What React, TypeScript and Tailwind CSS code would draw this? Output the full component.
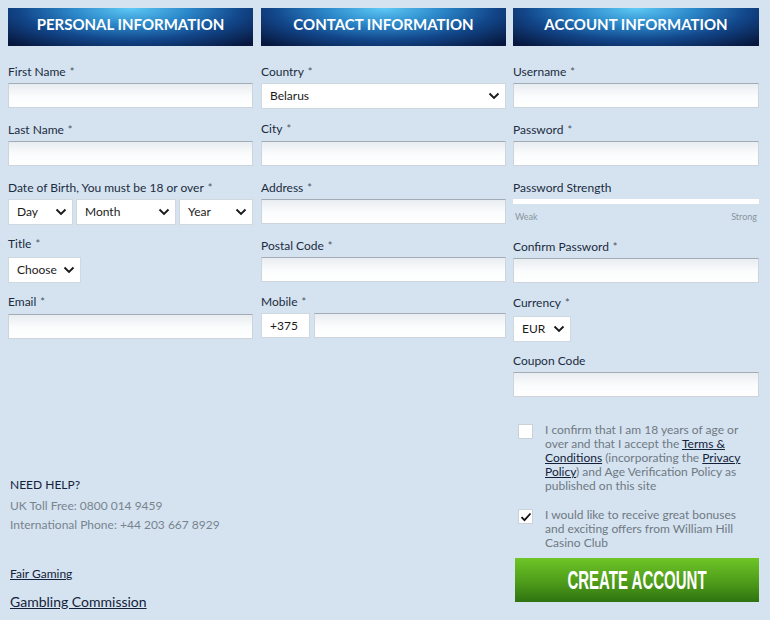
import React from "react";

const font = { fontFamily: "Lato, 'Open Sans', sans-serif" };

function Header({ children }: { children: React.ReactNode }) {
  return (
    <div className="h-[38px] flex items-center justify-center pb-[6px] text-white font-bold text-[15px] bg-[radial-gradient(ellipse_70%_130%_at_50%_0%,#5fcaf6_0%,#2a86c8_35%,#12468a_65%,#07173d_100%)]">
      {children}
    </div>
  );
}

function Label({ text, req = true }: { text: string; req?: boolean }) {
  return (
    <div className="h-[16px] leading-[16px] text-[12px] text-[#1b2b40]">
      {text}
      {req && <span className="ml-[4px] text-[#4a5563] text-[11px]">*</span>}
    </div>
  );
}

function Input({ className = "" }: { className?: string }) {
  return (
    <div
      className={`h-[25px] border border-[#cdd4dc] border-t-[#a3abb4] bg-[linear-gradient(#e9edf1,#fbfcfd_55%,#ffffff)] ${className}`}
    />
  );
}

function Chevron() {
  return (
    <svg width="12" height="8" viewBox="0 0 12 8" className="shrink-0">
      <path d="M1.5 1.5 L6 6 L10.5 1.5" fill="none" stroke="#1a1a1a" strokeWidth="1.9" />
    </svg>
  );
}

function Select({ value, className = "" }: { value: string; className?: string }) {
  return (
    <div
      className={`h-[26px] flex items-center justify-between pl-[8px] pr-[5px] bg-white border border-[#cfd7df] text-[12px] text-[#1a1a1a] ${className}`}
    >
      <span>{value}</span>
      <Chevron />
    </div>
  );
}

function Field({ label, req = true, children, mt = "mt-[14px]" }: { label: string; req?: boolean; children: React.ReactNode; mt?: string }) {
  return (
    <div className={mt}>
      <Label text={label} req={req} />
      <div className="mt-[3px]">{children}</div>
    </div>
  );
}

function Checkbox({ checked }: { checked?: boolean }) {
  return (
    <div className="w-[15px] h-[15px] bg-white border border-[#c9d1d9] flex items-center justify-center shrink-0">
      {checked && (
        <svg width="12" height="10" viewBox="0 0 12 10">
          <path d="M1.5 5.2 L4.5 8.2 L10.5 1.5" fill="none" stroke="#111" strokeWidth="1.8" />
        </svg>
      )}
    </div>
  );
}

export default function App() {
  return (
    <div style={font} className="w-[770px] h-[620px] bg-[#d5e3f0] overflow-hidden">
      <div className="grid grid-cols-[245px_245px_245px] gap-x-[8px] pl-[8px] pt-[8px]">
        {/* Column 1 */}
        <div className="flex flex-col">
          <Header>PERSONAL INFORMATION</Header>
          <Field label="First Name" mt="mt-[18px]">
            <Input />
          </Field>
          <Field label="Last Name">
            <Input />
          </Field>
          <Field label="Date of Birth, You must be 18 or over">
            <div className="flex gap-[3px]">
              <Select value="Day" className="w-[65px]" />
              <Select value="Month" className="w-[100px]" />
              <Select value="Year" className="flex-1" />
            </div>
          </Field>
          <div className="mt-[11px]">
            <Label text="Title" />
            <div className="mt-[5px]">
              <Select value="Choose" className="w-[73px]" />
            </div>
          </div>
          <div className="mt-[11px]">
            <Label text="Email" />
            <div className="mt-[4px]">
              <Input />
            </div>
          </div>
          <div className="mt-[138px] pl-[2px]">
            <div className="text-[12px] leading-[16px] text-[#13223a]">NEED HELP?</div>
            <div className="mt-[3px] text-[12px] leading-[19px] text-[#78838f]">
              <div>UK Toll Free: 0800 014 9459</div>
              <div>International Phone: +44 203 667 8929</div>
            </div>
            <div className="mt-[32px] text-[12px] leading-[16px] text-[#13223a] underline">Fair Gaming</div>
            <div className="mt-[11px] text-[14px] leading-[18px] text-[#13223a] underline">Gambling Commission</div>
          </div>
        </div>

        {/* Column 2 */}
        <div className="flex flex-col">
          <Header>CONTACT INFORMATION</Header>
          <Field label="Country" mt="mt-[18px]">
            <Select value="Belarus" />
          </Field>
          <div className="mt-[12px]">
            <Label text="City" />
            <div className="mt-[4px]">
              <Input />
            </div>
          </div>
          <div className="mt-[14px]">
            <Label text="Address" />
            <div className="mt-[3px]">
              <Input />
            </div>
          </div>
          <div className="mt-[14px]">
            <Label text="Postal Code" />
            <div className="mt-[3px]">
              <Input />
            </div>
          </div>
          <div className="mt-[12px]">
            <Label text="Mobile" />
            <div className="mt-[3px] flex gap-[4px]">
              <div className="w-[49px] h-[25px] bg-white border border-[#cfd7df] flex items-center pl-[8px] text-[12px] text-[#1a1a1a]">
                +375
              </div>
              <Input className="flex-1" />
            </div>
          </div>
        </div>

        {/* Column 3 */}
        <div className="flex flex-col -ml-[1px]">
          <Header>ACCOUNT INFORMATION</Header>
          <Field label="Username" mt="mt-[18px]">
            <Input />
          </Field>
          <Field label="Password">
            <Input />
          </Field>
          <div className="mt-[14px]">
            <Label text="Password Strength" req={false} />
            <div className="mt-[3px] h-[5px] bg-white" />
            <div className="mt-[7px] flex justify-between text-[9px] leading-[11px] text-[#8a949e] px-[2px]">
              <span>Weak</span>
              <span>Strong</span>
            </div>
          </div>
          <div className="mt-[17px]">
            <Label text="Confirm Password" />
            <div className="mt-[3px]">
              <Input />
            </div>
          </div>
          <div className="mt-[12px]">
            <Label text="Currency" />
            <div className="mt-[5px]">
              <Select value="EUR" className="w-[58px] h-[25px]" />
            </div>
          </div>
          <div className="mt-[11px]">
            <Label text="Coupon Code" req={false} />
            <div className="mt-[3px]">
              <Input />
            </div>
          </div>

          <div className="mt-[27px] flex pl-[5px] gap-[12px]">
            <Checkbox />
            <div className="text-[12px] leading-[14px] text-[#6f7983] -mt-[1px] pr-[4px]">
              I confirm that I am 18 years of age or over and that I accept the{" "}
              <span className="text-[#13223a] underline">Terms &amp; Conditions</span> (incorporating the{" "}
              <span className="text-[#13223a] underline">Privacy Policy</span>) and Age Verification Policy as
              published on this site
            </div>
          </div>
          <div className="mt-[16px] flex pl-[5px] gap-[12px]">
            <Checkbox checked />
            <div className="text-[12px] leading-[14px] text-[#6f7983] -mt-[1px] pr-[10px]">
              I would like to receive great bonuses and exciting offers from William Hill Casino Club
            </div>
          </div>
          <div className="mt-[8px] ml-[2px] h-[44px] flex items-center justify-center overflow-hidden bg-[linear-gradient(#6ec527,#4e9c1a_55%,#2f7311)]">
            <span
              className="inline-block text-white font-bold text-[25px] leading-[26px] scale-x-[0.6] whitespace-nowrap"
              style={{ fontFamily: "'Liberation Sans', Arial, sans-serif" }}
            >
              CREATE ACCOUNT
            </span>
          </div>
        </div>
      </div>
    </div>
  );
}
